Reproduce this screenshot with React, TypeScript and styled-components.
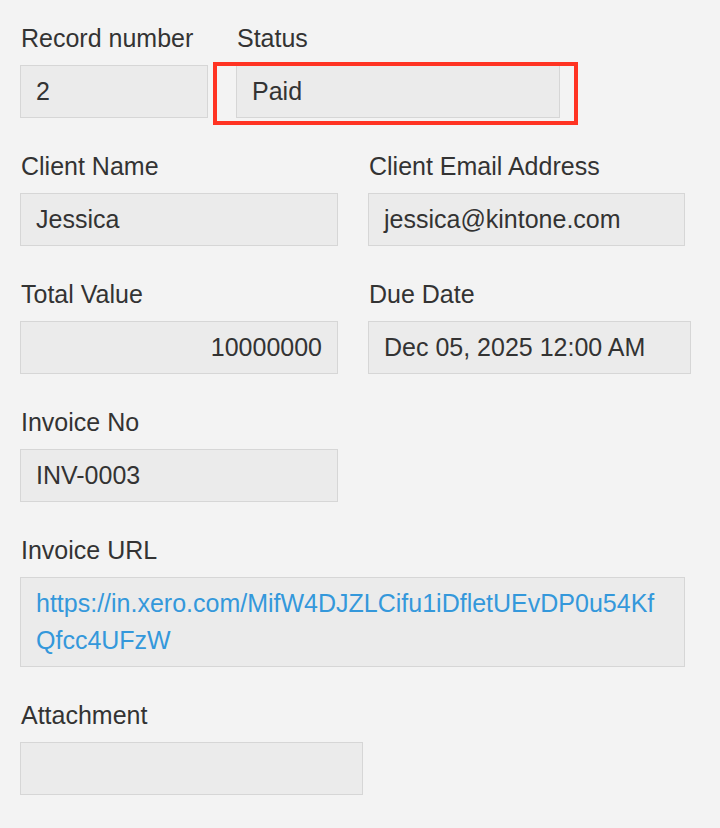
import styled, { createGlobalStyle } from 'styled-components'

const GlobalStyle = createGlobalStyle`
  html, body {
    margin: 0;
    padding: 0;
    background: #f3f3f3;
  }
  body {
    font-family: 'Liberation Sans', Arial, Helvetica, sans-serif;
    color: #333333;
  }
`

type Field = {
  label: string
  value?: string
  width: number
  align?: 'left' | 'right'
  link?: boolean
  highlight?: boolean
}

const rows: { gap: number; fields: Field[] }[] = [
  {
    gap: 28,
    fields: [
      { label: 'Record number', value: '2', width: 188 },
      { label: 'Status', value: 'Paid', width: 324, highlight: true },
    ],
  },
  {
    gap: 30,
    fields: [
      { label: 'Client Name', value: 'Jessica', width: 318 },
      { label: 'Client Email Address', value: 'jessica@kintone.com', width: 317 },
    ],
  },
  {
    gap: 30,
    fields: [
      { label: 'Total Value', value: '10000000', width: 318, align: 'right' },
      { label: 'Due Date', value: 'Dec 05, 2025 12:00 AM', width: 323 },
    ],
  },
  {
    gap: 30,
    fields: [{ label: 'Invoice No', value: 'INV-0003', width: 318 }],
  },
  {
    gap: 30,
    fields: [
      {
        label: 'Invoice URL',
        value: 'https://in.xero.com/MifW4DJZLCifu1iDfletUEvDP0u54KfQfcc4UFzW',
        width: 665,
        link: true,
      },
    ],
  },
  {
    gap: 30,
    fields: [{ label: 'Attachment', width: 343 }],
  },
]

const App = () => {
  return (
    <>
      <GlobalStyle />
      <Form>
        {rows.map((row, i) => (
          <Row key={i} $gap={row.gap}>
            {row.fields.map((f) => (
              <FieldBlock key={f.label} $width={f.width}>
                <Label>{f.label}</Label>
                <ValueBox $align={f.align ?? 'left'}>
                  {f.link ? <Link href="#">{f.value}</Link> : f.value}
                  {f.highlight && <Highlight />}
                </ValueBox>
              </FieldBlock>
            ))}
          </Row>
        ))}
      </Form>
    </>
  )
}

export default App

const Form = styled.div`
  padding: 24px 20px 0;
  display: flex;
  flex-direction: column;
  gap: 34px;
`

const Row = styled.div<{ $gap: number }>`
  display: flex;
  gap: ${(p) => p.$gap}px;
`

const FieldBlock = styled.div<{ $width: number }>`
  width: ${(p) => p.$width}px;
  display: flex;
  flex-direction: column;
  gap: 13px;
`

const Label = styled.div`
  font-size: 25px;
  line-height: 28px;
  padding-left: 1px;
  white-space: nowrap;
`

const ValueBox = styled.div<{ $align: 'left' | 'right' }>`
  position: relative;
  box-sizing: border-box;
  min-height: 53px;
  padding: 7px 15px;
  background: #ebebeb;
  border: 1px solid #d6d6d6;
  font-size: 25px;
  line-height: 37px;
  text-align: ${(p) => p.$align};
  word-break: break-all;
`

const Link = styled.a`
  color: #3498db;
  text-decoration: none;
`

const Highlight = styled.div`
  position: absolute;
  left: -24px;
  top: -4px;
  width: 365px;
  height: 63px;
  box-sizing: border-box;
  border: 4px solid #ff3322;
  pointer-events: none;
`
